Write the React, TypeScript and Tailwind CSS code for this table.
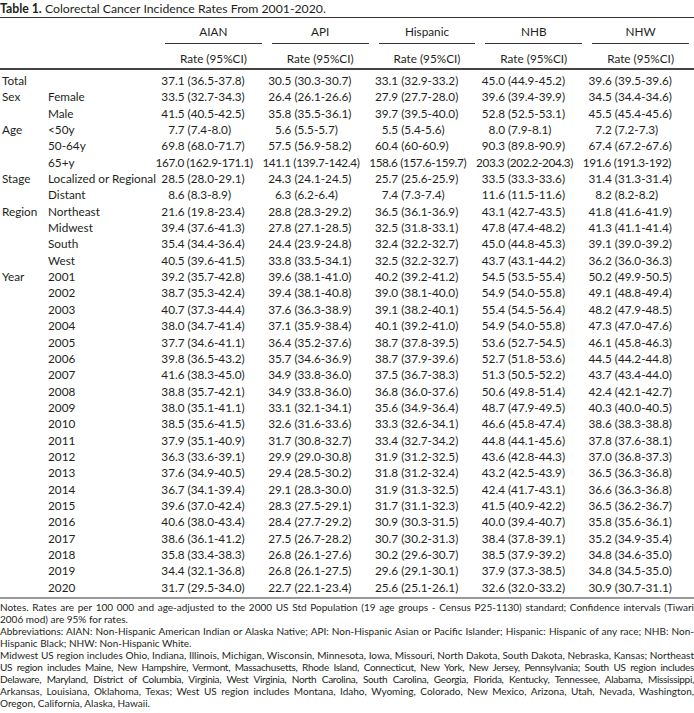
import React from "react";

type Row = { group?: string; label: string; values: string[] };

const rows: Row[] = [
  { group: "Total", label: "", values: ["37.1 (36.5-37.8)", "30.5 (30.3-30.7)", "33.1 (32.9-33.2)", "45.0 (44.9-45.2)", "39.6 (39.5-39.6)"] },
  { group: "Sex", label: "Female", values: ["33.5 (32.7-34.3)", "26.4 (26.1-26.6)", "27.9 (27.7-28.0)", "39.6 (39.4-39.9)", "34.5 (34.4-34.6)"] },
  { label: "Male", values: ["41.5 (40.5-42.5)", "35.8 (35.5-36.1)", "39.7 (39.5-40.0)", "52.8 (52.5-53.1)", "45.5 (45.4-45.6)"] },
  { group: "Age", label: "<50y", values: ["7.7 (7.4-8.0)", "5.6 (5.5-5.7)", "5.5 (5.4-5.6)", "8.0 (7.9-8.1)", "7.2 (7.2-7.3)"] },
  { label: "50-64y", values: ["69.8 (68.0-71.7)", "57.5 (56.9-58.2)", "60.4 (60-60.9)", "90.3 (89.8-90.9)", "67.4 (67.2-67.6)"] },
  { label: "65+y", values: ["167.0 (162.9-171.1)", "141.1 (139.7-142.4)", "158.6 (157.6-159.7)", "203.3 (202.2-204.3)", "191.6 (191.3-192)"] },
  { group: "Stage", label: "Localized or Regional", values: ["28.5 (28.0-29.1)", "24.3 (24.1-24.5)", "25.7 (25.6-25.9)", "33.5 (33.3-33.6)", "31.4 (31.3-31.4)"] },
  { label: "Distant", values: ["8.6 (8.3-8.9)", "6.3 (6.2-6.4)", "7.4 (7.3-7.4)", "11.6 (11.5-11.6)", "8.2 (8.2-8.2)"] },
  { group: "Region", label: "Northeast", values: ["21.6 (19.8-23.4)", "28.8 (28.3-29.2)", "36.5 (36.1-36.9)", "43.1 (42.7-43.5)", "41.8 (41.6-41.9)"] },
  { label: "Midwest", values: ["39.4 (37.6-41.3)", "27.8 (27.1-28.5)", "32.5 (31.8-33.1)", "47.8 (47.4-48.2)", "41.3 (41.1-41.4)"] },
  { label: "South", values: ["35.4 (34.4-36.4)", "24.4 (23.9-24.8)", "32.4 (32.2-32.7)", "45.0 (44.8-45.3)", "39.1 (39.0-39.2)"] },
  { label: "West", values: ["40.5 (39.6-41.5)", "33.8 (33.5-34.1)", "32.5 (32.2-32.7)", "43.7 (43.1-44.2)", "36.2 (36.0-36.3)"] },
  { group: "Year", label: "2001", values: ["39.2 (35.7-42.8)", "39.6 (38.1-41.0)", "40.2 (39.2-41.2)", "54.5 (53.5-55.4)", "50.2 (49.9-50.5)"] },
  { label: "2002", values: ["38.7 (35.3-42.4)", "39.4 (38.1-40.8)", "39.0 (38.1-40.0)", "54.9 (54.0-55.8)", "49.1 (48.8-49.4)"] },
  { label: "2003", values: ["40.7 (37.3-44.4)", "37.6 (36.3-38.9)", "39.1 (38.2-40.1)", "55.4 (54.5-56.4)", "48.2 (47.9-48.5)"] },
  { label: "2004", values: ["38.0 (34.7-41.4)", "37.1 (35.9-38.4)", "40.1 (39.2-41.0)", "54.9 (54.0-55.8)", "47.3 (47.0-47.6)"] },
  { label: "2005", values: ["37.7 (34.6-41.1)", "36.4 (35.2-37.6)", "38.7 (37.8-39.5)", "53.6 (52.7-54.5)", "46.1 (45.8-46.3)"] },
  { label: "2006", values: ["39.8 (36.5-43.2)", "35.7 (34.6-36.9)", "38.7 (37.9-39.6)", "52.7 (51.8-53.6)", "44.5 (44.2-44.8)"] },
  { label: "2007", values: ["41.6 (38.3-45.0)", "34.9 (33.8-36.0)", "37.5 (36.7-38.3)", "51.3 (50.5-52.2)", "43.7 (43.4-44.0)"] },
  { label: "2008", values: ["38.8 (35.7-42.1)", "34.9 (33.8-36.0)", "36.8 (36.0-37.6)", "50.6 (49.8-51.4)", "42.4 (42.1-42.7)"] },
  { label: "2009", values: ["38.0 (35.1-41.1)", "33.1 (32.1-34.1)", "35.6 (34.9-36.4)", "48.7 (47.9-49.5)", "40.3 (40.0-40.5)"] },
  { label: "2010", values: ["38.5 (35.6-41.5)", "32.6 (31.6-33.6)", "33.3 (32.6-34.1)", "46.6 (45.8-47.4)", "38.6 (38.3-38.8)"] },
  { label: "2011", values: ["37.9 (35.1-40.9)", "31.7 (30.8-32.7)", "33.4 (32.7-34.2)", "44.8 (44.1-45.6)", "37.8 (37.6-38.1)"] },
  { label: "2012", values: ["36.3 (33.6-39.1)", "29.9 (29.0-30.8)", "31.9 (31.2-32.5)", "43.6 (42.8-44.3)", "37.0 (36.8-37.3)"] },
  { label: "2013", values: ["37.6 (34.9-40.5)", "29.4 (28.5-30.2)", "31.8 (31.2-32.4)", "43.2 (42.5-43.9)", "36.5 (36.3-36.8)"] },
  { label: "2014", values: ["36.7 (34.1-39.4)", "29.1 (28.3-30.0)", "31.9 (31.3-32.5)", "42.4 (41.7-43.1)", "36.6 (36.3-36.8)"] },
  { label: "2015", values: ["39.6 (37.0-42.4)", "28.3 (27.5-29.1)", "31.7 (31.1-32.3)", "41.5 (40.9-42.2)", "36.5 (36.2-36.7)"] },
  { label: "2016", values: ["40.6 (38.0-43.4)", "28.4 (27.7-29.2)", "30.9 (30.3-31.5)", "40.0 (39.4-40.7)", "35.8 (35.6-36.1)"] },
  { label: "2017", values: ["38.6 (36.1-41.2)", "27.5 (26.7-28.2)", "30.7 (30.2-31.3)", "38.4 (37.8-39.1)", "35.2 (34.9-35.4)"] },
  { label: "2018", values: ["35.8 (33.4-38.3)", "26.8 (26.1-27.6)", "30.2 (29.6-30.7)", "38.5 (37.9-39.2)", "34.8 (34.6-35.0)"] },
  { label: "2019", values: ["34.4 (32.1-36.8)", "26.8 (26.1-27.5)", "29.6 (29.1-30.1)", "37.9 (37.3-38.5)", "34.8 (34.5-35.0)"] },
  { label: "2020", values: ["31.7 (29.5-34.0)", "22.7 (22.1-23.4)", "25.6 (25.1-26.1)", "32.6 (32.0-33.2)", "30.9 (30.7-31.1)"] },
];

const groups = ["AIAN", "API", "Hispanic", "NHB", "NHW"];

// footnote lines, broken where the printed table breaks them
const notes: { text: string; last?: boolean; tight?: boolean }[] = [
  { text: "Notes. Rates are per 100 000 and age-adjusted to the 2000 US Std Population (19 age groups - Census P25-1130) standard; Confidence intervals (Tiwari" },
  { text: "2006 mod) are 95% for rates.", last: true },
  { text: "Abbreviations: AIAN: Non-Hispanic American Indian or Alaska Native; API: Non-Hispanic Asian or Pacific Islander; Hispanic: Hispanic of any race; NHB: Non-" },
  { text: "Hispanic Black; NHW: Non-Hispanic White.", last: true },
  { text: "Midwest US region includes Ohio, Indiana, Illinois, Michigan, Wisconsin, Minnesota, Iowa, Missouri, North Dakota, South Dakota, Nebraska, Kansas; Northeast" },
  { text: "US region includes Maine, New Hampshire, Vermont, Massachusetts, Rhode Island, Connecticut, New York, New Jersey, Pennsylvania; South US region includes", tight: true },
  { text: "Delaware, Maryland, District of Columbia, Virginia, West Virginia, North Carolina, South Carolina, Georgia, Florida, Kentucky, Tennessee, Alabama, Mississippi,", tight: true },
  { text: "Arkansas, Louisiana, Oklahoma, Texas; West US region includes Montana, Idaho, Wyoming, Colorado, New Mexico, Arizona, Utah, Nevada, Washington," },
  { text: "Oregon, California, Alaska, Hawaii.", last: true },
];

// decimal-aligned cell: integer part right-aligned, remainder flows on
function Value({ v }: { v: string }) {
  const dot = v.indexOf(".");
  const wide = dot > 2;
  return (
    <div className={`flex pl-[1px] whitespace-nowrap ${wide ? "tracking-[-0.35px]" : ""}`}>
      <span className="flex justify-end w-[14px]">{v.slice(0, dot)}</span>
      <span>{v.slice(dot)}</span>
    </div>
  );
}

export default function App() {
  return (
    <div className="w-[694px] bg-white text-[#231f20] font-['Lato','Liberation_Sans',sans-serif]">
      <div className="h-[17px] text-[12.25px] leading-[17px] whitespace-nowrap">
        <span className="font-bold">Table 1.</span> Colorectal Cancer Incidence Rates From 2001-2020.
      </div>

      <div className="border-t border-[#333] text-[11.75px]">
        {/* group header */}
        <div className="grid grid-cols-[48px_112px_repeat(5,minmax(0,1fr))]">
          <div className="col-span-2" />
          {groups.map((g) => (
            <div key={g} className="mx-[5px] pt-[6px] pb-[3px] leading-[16px] text-center border-b border-[#333]">
              {g}
            </div>
          ))}
        </div>
        <div className="grid grid-cols-[48px_112px_repeat(5,minmax(0,1fr))] border-b-2 border-[#444]">
          <div className="col-span-2" />
          {groups.map((g) => (
            <div key={g} className="pt-[7px] pb-[1px] leading-[16px] text-center">
              Rate (95%CI)
            </div>
          ))}
        </div>

        {/* body */}
        <div className="pt-[3px] pb-[1px] border-b-2 border-[#999]">
          {rows.map((r, i) => (
            <div key={i} className="grid grid-cols-[48px_112px_repeat(5,minmax(0,1fr))] leading-[16.35px]">
              <div className="pl-[2px] whitespace-nowrap">{r.group ?? ""}</div>
              <div className="whitespace-nowrap">{r.label}</div>
              {r.values.map((v, j) => (
                <Value key={j} v={v} />
              ))}
            </div>
          ))}
        </div>
      </div>

      <div className="mt-[2px] text-[10px] leading-[12px]">
        {notes.map((n, i) => (
          <div
            key={i}
            className={
              n.last
                ? "text-left"
                : n.tight
                ? "text-justify [text-align-last:justify] tracking-[-0.3px]"
                : "text-justify [text-align-last:justify]"
            }
          >
            {n.text}
          </div>
        ))}
      </div>
    </div>
  );
}
